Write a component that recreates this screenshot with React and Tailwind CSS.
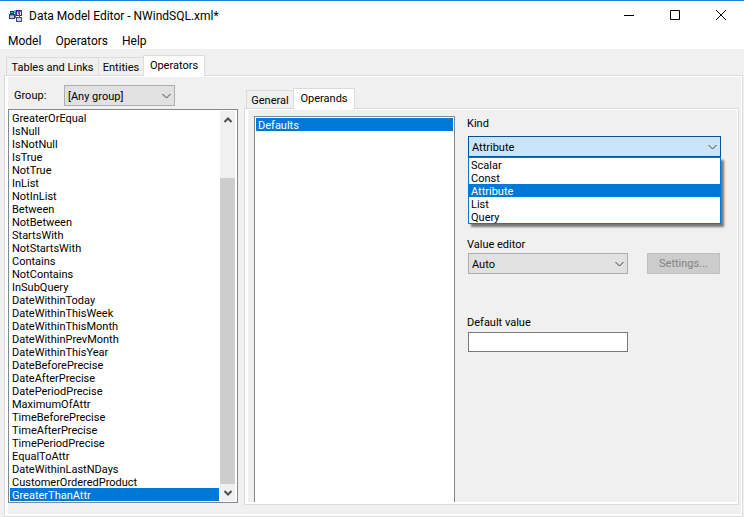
const operators = [
  "GreaterOrEqual", "IsNull", "IsNotNull", "IsTrue", "NotTrue", "InList", "NotInList", "Between",
  "NotBetween", "StartsWith", "NotStartsWith", "Contains", "NotContains", "InSubQuery",
  "DateWithinToday", "DateWithinThisWeek", "DateWithinThisMonth", "DateWithinPrevMonth",
  "DateWithinThisYear", "DateBeforePrecise", "DateAfterPrecise", "DatePeriodPrecise",
  "MaximumOfAttr", "TimeBeforePrecise", "TimeAfterPrecise", "TimePeriodPrecise", "EqualToAttr",
  "DateWithinLastNDays", "CustomerOrderedProduct", "GreaterThanAttr",
];

const kinds = ["Scalar", "Const", "Attribute", "List", "Query"];

function AppIcon() {
  return (
    <svg width="14" height="13" viewBox="0 0 14 13" shapeRendering="crispEdges" aria-hidden="true">
      <rect x="1" y="1" width="4" height="3" fill="#1c4a5e" />
      <rect x="2" y="2" width="2" height="1" fill="#2fb8b8" />
      <rect x="5" y="0" width="2" height="3" fill="#35c4b8" />
      <rect x="6" y="2" width="1" height="4" fill="#008878" />
      <rect x="0" y="4" width="6" height="5" fill="#243c80" />
      <rect x="1" y="5" width="4" height="1" fill="#2fb8b8" />
      <rect x="1" y="6" width="4" height="2" fill="#c4cad8" />
      <rect x="7" y="0" width="6" height="6" fill="#2a2f96" />
      <rect x="8" y="1" width="5" height="1" fill="#d83038" />
      <rect x="8" y="2" width="4" height="3" fill="#e6d6e0" />
      <rect x="9" y="2" width="2" height="2" fill="#d83038" />
      <rect x="10" y="4" width="1" height="3" fill="#b02838" />
      <rect x="6" y="5" width="1" height="3" fill="#d83038" />
      <rect x="7" y="7" width="6" height="5" fill="#3a4494" />
      <rect x="8" y="8" width="4" height="3" fill="#ccd0e0" />
    </svg>
  );
}

function Chevron() {
  return (
    <svg className="pointer-events-none absolute top-1/2 right-1 -translate-y-1/2" width="9" height="5" viewBox="0 0 9 5" fill="none" stroke="#444" aria-hidden="true">
      <path d="M.5.5l4 4 4-4" />
    </svg>
  );
}

function Combo({ id, value, options, width, open }) {
  return (
    <div className={`relative ${width}`}>
      <select
        id={id}
        defaultValue={value}
        className={`block h-[21px] w-full appearance-none border pt-0.5 pr-4 pl-[3px] leading-4 outline-none ${
          open ? "border-[#005499] bg-[#cce4f7]" : "border-[#adadad] bg-[#e1e1e1]"
        }`}
      >
        {options.map((o) => <option key={o}>{o}</option>)}
      </select>
      <Chevron />
      {open && (
        <ul role="listbox" aria-label="Kind options" className="absolute top-full left-0 z-10 w-full border border-[#0078d7] bg-white shadow-[3px_3px_2px_rgba(0,0,0,0.5)]">
          {options.map((o) => <Option key={o} selected={o === value}>{o}</Option>)}
        </ul>
      )}
    </div>
  );
}

function Option({ selected, children }) {
  return (
    <li
      role="option"
      aria-selected={Boolean(selected)}
      className={`h-[13px] pl-0.5 leading-[15px] ${selected ? "bg-[#0078d7] text-white" : ""}`}
    >
      {children}
    </li>
  );
}

function Tabs({ label, tabs, active }) {
  return (
    <div role="tablist" aria-label={label} className="flex h-5 items-end pl-0.5">
      {tabs.map(([name, width]) => (
        <button
          key={name}
          type="button"
          role="tab"
          aria-selected={name === active}
          className={`relative border border-b-0 border-[#dcdcdc] whitespace-nowrap ${width} ${
            name === active ? "-mb-px h-[21px] bg-white" : "-mr-px h-[18px] pt-0.5"
          }`}
        >
          {name}
        </button>
      ))}
    </div>
  );
}

function Pane({ className, children }) {
  return (
    <div className="flex flex-1 flex-col border border-[#dcdcdc]">
      <div className={`flex flex-1 border-t border-r border-b-2 border-l-3 border-white ${className}`}>
        {children}
      </div>
    </div>
  );
}

function ScrollBar() {
  return (
    <div className="flex w-[15px] flex-col bg-[#f0f0f0]">
      <button type="button" aria-label="Scroll up" className="flex h-[17px] items-center justify-center">
        <svg width="8" height="6" viewBox="0 0 8 6" fill="none" stroke="#505050" strokeWidth="2"><path d="M.5 5L4 1.500 7.500 5" /></svg>
      </button>
      <div className="flex flex-1 flex-col justify-end">
        <div className="h-[86%] bg-[#cdcdcd]" />
      </div>
      <button type="button" aria-label="Scroll down" className="flex h-[17px] items-center justify-center">
        <svg width="8" height="6" viewBox="0 0 8 6" fill="none" stroke="#505050" strokeWidth="2"><path d="M.5 1L4 4.500 7.500 1" /></svg>
      </button>
    </div>
  );
}

export default function App() {
  return (
    <div className="flex min-h-screen flex-col border-t border-[#1a80d6] bg-[#f0f0f0] font-[Roboto,sans-serif] text-[11px] leading-4 text-black">
      <header className="bg-white text-xs">
        <div className="flex h-[30px] items-center pl-[9px]">
          <AppIcon />
          <h1 className="ml-1.5 flex-1">Data Model Editor - NWindSQL.xml*</h1>
          <div className="flex self-stretch pb-0.5">
            <button type="button" aria-label="Minimize" className="flex w-[46px] items-center justify-center">
              <svg width="10" height="10" stroke="#000"><path d="M0 5.500h10" /></svg>
            </button>
            <button type="button" aria-label="Maximize" className="flex w-[46px] items-center justify-center">
              <svg width="10" height="10" fill="none" stroke="#000"><path d="M.5.5h9v9h-9z" /></svg>
            </button>
            <button type="button" aria-label="Close" className="flex w-[46px] items-center justify-center">
              <svg width="10" height="10" stroke="#000"><path d="M0 0l10 10M10 0L0 10" /></svg>
            </button>
          </div>
        </div>
        <nav aria-label="Main menu" className="flex h-[18px] items-end gap-3.5 pl-2">
          <button type="button">Model</button>
          <button type="button">Operators</button>
          <button type="button">Help</button>
        </nav>
      </header>

      <main className="flex flex-1 flex-col pt-1.5 pr-px pl-1">
        <Tabs
          label="Model sections"
          active="Operators"
          tabs={[["Tables and Links", "w-[93px]"], ["Entities", "w-[46px]"], ["Operators", "w-[62px]"]]}
        />
        <Pane className="gap-1.5 pr-0.5">
          <section className="flex w-[230px] flex-col pt-2 pb-[11px]">
            <div className="mb-[3px] flex items-center pl-1.5">
              <label htmlFor="group" className="w-[50px]">Group:</label>
              <Combo id="group" value="[Any group]" options={["[Any group]"]} width="w-[111px]" />
            </div>
            <div className="flex border border-[#828790] bg-white py-px pr-0.5 pl-px">
              <ul role="listbox" aria-label="Operators" className="mr-px flex-1">
                {operators.map((o) => <Option key={o} selected={o === "GreaterThanAttr"}>{o}</Option>)}
              </ul>
              <ScrollBar />
            </div>
          </section>

          <section className="flex flex-1 flex-col pt-[11px] pb-[9px]">
            <Tabs
              label="Operator details"
              active="Operands"
              tabs={[["General", "w-12"], ["Operands", "w-[62px]"]]}
            />
            <Pane className="gap-3 pl-1.5">
              <ul role="listbox" aria-label="Operands" className="mt-1.5 w-[201px] border border-b-0 border-[#828790] bg-white p-px">
                <Option selected>Defaults</Option>
              </ul>
              <form className="flex-1 pt-1.5">
                <label htmlFor="kind" className="block">Kind</label>
                <div className="mb-20 pt-1 pl-px">
                  <Combo id="kind" value="Attribute" options={kinds} width="w-[253px]" open />
                </div>
                <label htmlFor="editor" className="block">Value editor</label>
                <div className="mb-[41px] flex gap-[19px] pl-px">
                  <Combo id="editor" value="Auto" options={["Auto"]} width="w-40" />
                  <button type="button" disabled className="h-[21px] w-[73px] border border-[#bfbfbf] bg-[#cccccc] text-[#838383]">Settings...</button>
                </div>
                <label htmlFor="default" className="block">Default value</label>
                <div className="pt-px pl-px">
                  <input id="default" type="text" className="block h-5 w-40 border border-[#7a7a7a] bg-white px-1 outline-none" />
                </div>
              </form>
            </Pane>
          </section>
        </Pane>
      </main>
    </div>
  );
}
